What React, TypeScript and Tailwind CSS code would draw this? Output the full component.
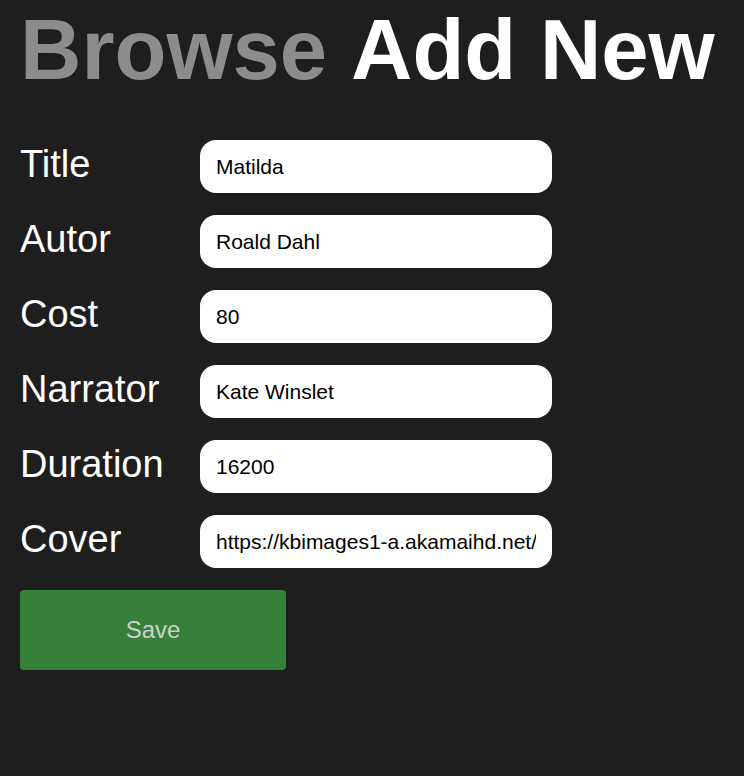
import React from 'react'

const fields: Array<{ label: string; value: string }> = [
  { label: 'Title', value: 'Matilda' },
  { label: 'Autor', value: 'Roald Dahl' },
  { label: 'Cost', value: '80' },
  { label: 'Narrator', value: 'Kate Winslet' },
  { label: 'Duration', value: '16200' },
  { label: 'Cover', value: 'https://kbimages1-a.akamaihd.net/6f8b2c1e-0b3c-4d8f-9a1e-matilda.jpg' },
]

export default function App() {
  return (
    <div className="min-h-[776px] bg-[#1e1e1e] px-5 pt-[7px] font-['Liberation_Sans',Arial,sans-serif] text-white">
      {/* Nav */}
      <nav className="flex gap-[24px] text-[85px] font-bold leading-[85px]">
        <span className="text-[#8c8c8c]">Browse</span>
        <span className="text-white">Add New</span>
      </nav>

      {/* Form */}
      <form className="mt-[48px] flex flex-col gap-[22px]" onSubmit={(e) => e.preventDefault()}>
        {fields.map((f) => (
          <div key={f.label} className="flex items-center">
            <label className="w-[180px] text-[38px] leading-[40px] -mt-[6px]">{f.label}</label>
            <input
              defaultValue={f.value}
              className="h-[53px] w-[352px] rounded-2xl bg-white px-4 text-[21px] text-black outline-none"
            />
          </div>
        ))}
        <button
          type="submit"
          className="h-[80px] w-[266px] rounded bg-[#36813a] text-[24px] text-[#cfcfcf]"
        >
          Save
        </button>
      </form>
    </div>
  )
}
